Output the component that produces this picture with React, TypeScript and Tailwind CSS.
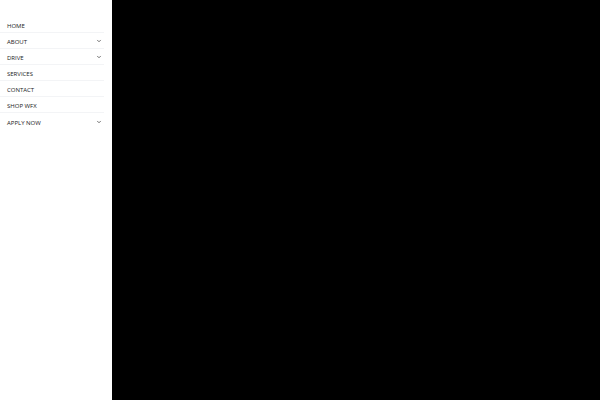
import { ChevronDown } from "lucide-react";

const items = [
  { label: "HOME", sub: false },
  { label: "ABOUT", sub: true },
  { label: "DRIVE", sub: true },
  { label: "SERVICES", sub: false },
  { label: "CONTACT", sub: false },
  { label: "SHOP WFX", sub: false },
  { label: "APPLY NOW", sub: true },
];

export default function App() {
  return (
    <div className="flex h-[400px] w-[600px] bg-black">
      <nav className="h-full w-[112px] bg-white pt-[17px] pr-[8px]">
        <ul>
          {items.map((item, index) => (
            <li
              key={item.label}
              className={`flex h-[16px] items-center justify-between pl-[7px] pr-[2px] ${
                index < items.length - 1 ? "border-b border-gray-100" : ""
              }`}
            >
              <span
                className="pt-[3px] text-[6px] leading-none text-[#222]"
                style={{ fontFamily: '"Open Sans", "Liberation Sans", sans-serif' }}
              >
                {item.label}
              </span>
              {item.sub && (
                <ChevronDown className="mt-[1px] h-[6px] w-[6px] text-[#222]" strokeWidth={2.5} />
              )}
            </li>
          ))}
        </ul>
      </nav>
      <main className="flex-1 bg-black" />
    </div>
  );
}
